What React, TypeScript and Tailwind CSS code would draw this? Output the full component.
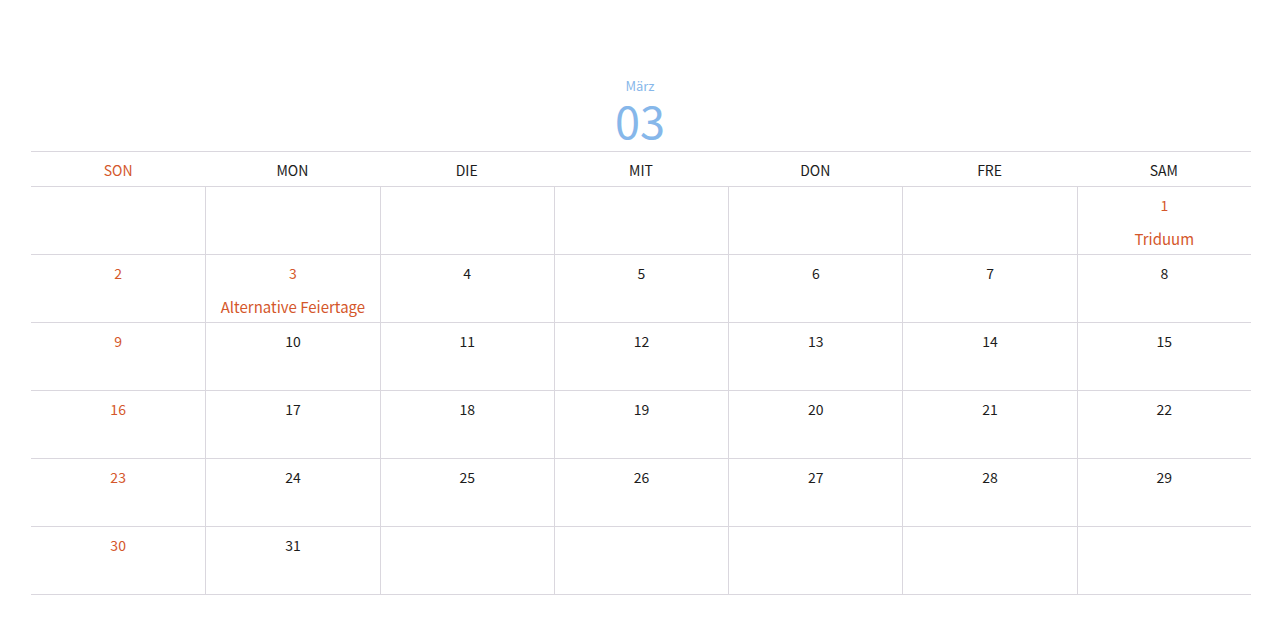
const weekdays = ["SON", "MON", "DIE", "MIT", "DON", "FRE", "SAM"];

type Day = { date: number; holiday?: string } | null;

const holidays: Record<number, string> = {
  1: "Triduum",
  3: "Alternative Feiertage",
};

// März starts on a Saturday, 31 days.
function buildWeeks(): Day[][] {
  const cells: Day[] = Array(6).fill(null);
  for (let d = 1; d <= 31; d++) cells.push({ date: d, holiday: holidays[d] });
  while (cells.length % 7 !== 0) cells.push(null);
  const weeks: Day[][] = [];
  for (let i = 0; i < cells.length; i += 7) weeks.push(cells.slice(i, i + 7));
  return weeks;
}

export default function App() {
  const weeks = buildWeeks();

  return (
    <div
      className="min-h-[627px] w-full bg-white"
      style={{ fontFamily: '"Noto Sans CJK JP", "Noto Sans", sans-serif' }}
    >
      <div className="flex flex-col items-center pt-[78px]">
        <div className="text-[13px] leading-[16px] text-[#86b7ea]">März</div>
        <div className="mt-[2px] text-[45px] leading-[48px] text-[#86b7ea]">03</div>
      </div>

      <div className="ml-[31px] mt-[7px] w-[1220px]">
        <div className="grid h-[36px] grid-cols-7 border-y border-[#dad7de]">
          {weekdays.map((w, i) => (
            <div
              key={w}
              className={`flex items-center justify-center pt-[2px] text-[14px] ${
                i === 0 ? "text-[#d4572b]" : "text-[#1c1c1c]"
              }`}
            >
              {w}
            </div>
          ))}
        </div>

        {weeks.map((week, wi) => (
          <div key={wi} className="grid h-[68px] grid-cols-7 border-b border-[#dad7de]">
            {week.map((day, di) => {
              const red = di === 0 || !!day?.holiday;
              return (
                <div
                  key={di}
                  className={`flex flex-col items-center pt-[8px] text-[14px] leading-[20px] ${
                    di > 0 ? "border-l border-[#dad7de]" : ""
                  } ${red ? "text-[#d4572b]" : "text-[#1c1c1c]"}`}
                >
                  {day && <span>{day.date}</span>}
                  {day?.holiday && (
                    <span className="mt-[14px] text-[15px]">{day.holiday}</span>
                  )}
                </div>
              );
            })}
          </div>
        ))}
      </div>
    </div>
  );
}
